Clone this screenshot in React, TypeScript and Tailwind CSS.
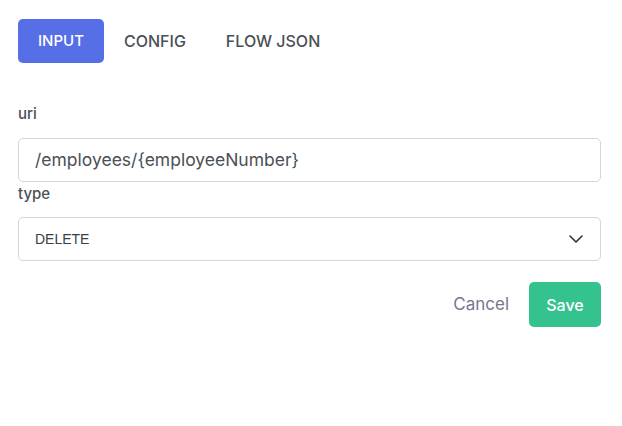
export default function App() {
  return (
    <div className="h-[426px] w-[622px] bg-white pl-[18px] pr-[21px] pt-[19px] font-['Inter','Noto_Sans',sans-serif] text-[#495057]">
      <div className="flex items-center">
        <button className="h-[44px] w-[86px] rounded-[5px] bg-[#566ee6] text-[15px] font-medium text-white">INPUT</button>
        <button className="ml-[20px] text-[16px] font-medium text-[#495057]">CONFIG</button>
        <button className="ml-[40px] text-[16px] font-medium text-[#495057]">FLOW JSON</button>
      </div>

      <div className="mt-[40px] text-[15px] font-medium text-[#495057]">uri</div>
      <input
        readOnly
        value="/employees/{employeeNumber}"
        className="mt-[12px] block h-[44px] w-full rounded-[5px] border border-[#d4d6da] px-[16px] text-[17.5px] text-[#495057] outline-none"
      />

      <div className="mt-[1px] text-[15px] font-medium text-[#495057]">type</div>
      <div className="mt-[12px] flex h-[44px] items-center justify-between rounded-[5px] border border-[#d4d6da] pl-[16px] pr-[17px]">
        <span className="font-['Liberation_Sans',sans-serif] text-[14px] text-[#3a3f45]">DELETE</span>
        <svg width="14" height="8" viewBox="0 0 14 8" fill="none" stroke="#333" strokeWidth="1.6" strokeLinecap="round" strokeLinejoin="round">
          <polyline points="1,1 7,7 13,1" />
        </svg>
      </div>

      <div className="mt-[21px] flex items-center justify-end gap-[20px]">
        <button className="text-[17px] text-[#74788d]">Cancel</button>
        <button className="h-[45px] w-[72px] rounded-[5px] bg-[#34c38f] text-[16px] font-medium text-white">Save</button>
      </div>
    </div>
  );
}
